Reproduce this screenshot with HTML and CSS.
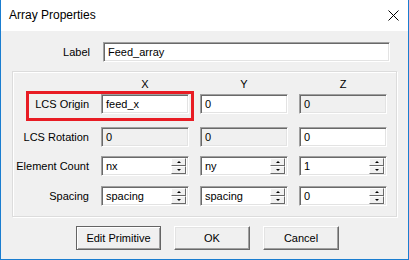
FILE: index.html
```html
<!DOCTYPE html>
<html lang="en">
<head>
  <meta charset="UTF-8">
  <title>Array Properties</title>
  <link rel="stylesheet" href="styles.css">
</head>
<body>
  <div class="window">
    <div class="titlebar">
      <span class="title">Array Properties</span>
      <svg class="close" width="11" height="11" viewBox="0 0 11 11">
        <path d="M0.5 0.5 L10.5 10.5 M10.5 0.5 L0.5 10.5" stroke="#000" stroke-width="1" fill="none"/>
      </svg>
    </div>
    <div class="content">
      <div class="label-row">
        <span class="lbl">Label</span>
        <div class="field wide">Feed_array</div>
      </div>

      <div class="group">
        <div class="highlight"></div>
        <div class="grid">
          <span></span>
          <span class="head">X</span>
          <span class="head">Y</span>
          <span class="head">Z</span>

          <span class="lbl">LCS Origin</span>
          <div class="field">feed_x</div>
          <div class="field">0</div>
          <div class="field off">0</div>

          <span class="lbl">LCS Rotation</span>
          <div class="field off">0</div>
          <div class="field off">0</div>
          <div class="field">0</div>

          <span class="lbl">Element Count</span>
          <div class="field spin"><span class="val">nx</span><div class="arrows"><b class="up"></b><b class="down"></b></div></div>
          <div class="field spin"><span class="val">ny</span><div class="arrows"><b class="up"></b><b class="down"></b></div></div>
          <div class="field spin"><span class="val">1</span><div class="arrows"><b class="up"></b><b class="down"></b></div></div>

          <span class="lbl">Spacing</span>
          <div class="field spin"><span class="val">spacing</span><div class="arrows"><b class="up"></b><b class="down"></b></div></div>
          <div class="field spin"><span class="val">spacing</span><div class="arrows"><b class="up"></b><b class="down"></b></div></div>
          <div class="field spin"><span class="val">0</span><div class="arrows"><b class="up"></b><b class="down"></b></div></div>
        </div>
      </div>

      <div class="buttons">
        <button class="btn edit">Edit Primitive</button>
        <button class="btn">OK</button>
        <button class="btn">Cancel</button>
      </div>
    </div>
  </div>
</body>
</html>
```

FILE: styles.css
```css
body { margin: 0; font-family: "Liberation Sans", Arial, sans-serif; font-size: 11px; color: #000; background: #fff; }
.window { width: 407px; height: 259px; border: 1px solid #1a7dd0; border-top: none; display: flex; flex-direction: column; }
.titlebar { height: 31px; background: #fff; display: flex; align-items: center; justify-content: space-between; padding: 0 9px 0 8px; }
.title { font-size: 12px; margin-top: -2px; }
.close { margin-top: -1px; }
.content { flex: 1; background: #f0f0f0; padding: 11px 0 0 11px; }

.lbl { display: flex; align-items: center; justify-content: flex-end; height: 20px; padding-right: 1px; }
.label-row { display: flex; align-items: center; }
.label-row .lbl { width: 78px; margin-right: 12px; }

.field { box-sizing: border-box; height: 20px; width: 88px; background: #fff; border: 1px solid; border-color: #a0a0a0 #fff #fff #a0a0a0; box-shadow: inset 1px 1px #696969, inset -1px -1px #e3e3e3; padding: 0 4px; display: flex; align-items: center; white-space: nowrap; }
.field.wide { width: 287px; }
.field.off { background: #f0f0f0; }
.field.spin { padding-right: 2px; justify-content: space-between; }
.arrows { display: flex; flex-direction: column; gap: 0; }
.arrows b { box-sizing: border-box; width: 15px; height: 8px; background: #f0f0f0; border: 1px solid; border-color: #fff #696969 #696969 #fff; position: relative; }
.arrows b::after { content: ""; position: absolute; left: 5px; width: 0; height: 0; border-left: 2px solid transparent; border-right: 2px solid transparent; }
.arrows .up::after { top: 2px; border-bottom: 2px solid #000; }
.arrows .down::after { top: 2px; border-top: 2px solid #000; }

.group { position: relative; box-sizing: border-box; width: 385px; height: 146px; margin-top: 9px; border: 1px solid #dcdcdc; box-shadow: inset 1px 1px #fff, 1px 1px #fff; padding: 6px 0 0 0; }
.grid { display: grid; grid-template-columns: 77px 88px 88px 88px; column-gap: 11px; grid-template-rows: 16px 33px 29px 30px 20px; align-items: start; }
.head { text-align: center; line-height: 13px; }
.highlight { position: absolute; left: 13px; top: 19px; width: 162px; height: 24px; border: 3px solid #e81c24; }

.buttons { display: flex; margin: 9px 0 0 64px; gap: 13px; }
.btn { box-sizing: border-box; height: 24px; width: 76px; font: inherit; color: #000; background: #f0f0f0; border: 1px solid; border-color: #fff #696969 #696969 #fff; box-shadow: inset -1px -1px #a0a0a0, inset 1px 1px #e3e3e3; padding: 0; }
.btn.edit { width: 85px; border-color: #646464; box-shadow: inset 1px 1px #fff, inset -1px -1px #a0a0a0; }
```
